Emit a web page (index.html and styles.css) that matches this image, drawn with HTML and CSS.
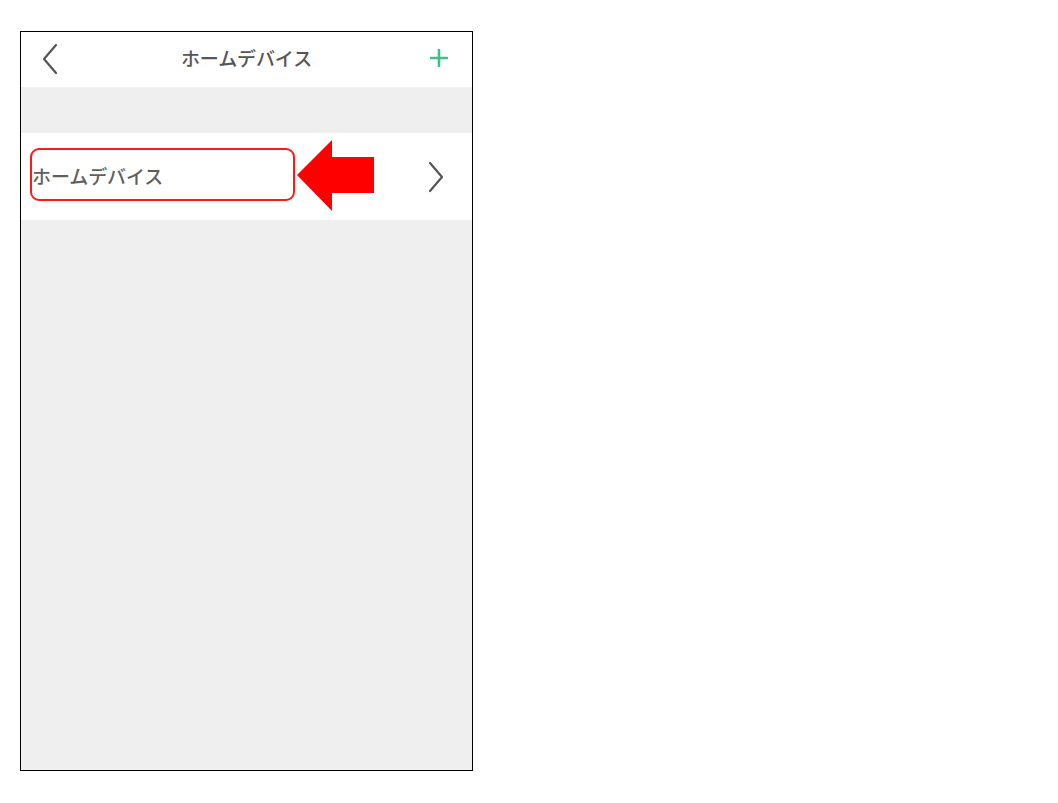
FILE: index.html
```html
<!DOCTYPE html>
<html lang="ja">
<head>
<meta charset="utf-8">
<link rel="stylesheet" href="styles.css">
</head>
<body>
<div class="phone">
  <header class="topbar">
    <span class="back">
      <svg width="16" height="32" viewBox="0 0 16 32"><path d="M14 2 L2 16 L14 30" fill="none" stroke="#555" stroke-width="2.2" stroke-linecap="round" stroke-linejoin="round"/></svg>
    </span>
    <span class="title">ホームデバイス</span>
    <span class="add">
      <svg width="18" height="18" viewBox="0 0 18 18"><path d="M9 1 V17 M1 9 H17" stroke="#3cbf8a" stroke-width="2.6" stroke-linecap="round"/></svg>
    </span>
  </header>
  <div class="spacer"></div>
  <div class="row">
    <div class="highlight"><span class="label">ホームデバイス</span></div>
    <svg class="arrow" width="78" height="72" viewBox="0 0 78 72"><polygon points="0,35 35,0 35,17 77,17 77,53 35,53 35,71" fill="#ff0000"/></svg>
    <span class="chev">
      <svg width="16" height="32" viewBox="0 0 16 32"><path d="M2 2 L14 16 L2 30" fill="none" stroke="#555" stroke-width="2.2" stroke-linecap="round" stroke-linejoin="round"/></svg>
    </span>
  </div>
  <div class="rest"></div>
</div>
</body>
</html>
```

FILE: styles.css
```css
html, body {
  margin: 0;
  padding: 0;
  background: #fff;
}
body {
  font-family: "Noto Sans CJK JP", "Noto Sans", sans-serif;
}
.phone {
  margin: 31px 0 0 20px;
  width: 451px;
  height: 738px;
  border: 1px solid #000;
  background: #efefef;
  display: flex;
  flex-direction: column;
}
.topbar {
  height: 55px;
  background: #fff;
  display: flex;
  align-items: center;
  justify-content: space-between;
  padding: 0 24px 0 21px;
  position: relative;
}
.back, .add, .chev {
  display: flex;
  align-items: center;
}
.back {
  margin-top: -2px;
}
.add {
  margin-top: -3px;
}
.title {
  position: absolute;
  left: 0;
  right: 0;
  margin-top: -4px;
  text-align: center;
  font-size: 19px;
  font-weight: 500;
  color: #555;
  letter-spacing: -0.1px;
  pointer-events: none;
}
.spacer {
  height: 46px;
}
.row {
  height: 87px;
  background: #fff;
  display: flex;
  align-items: center;
  padding: 0 28px 0 9px;
  position: relative;
}
.highlight {
  width: 261px;
  height: 49px;
  border: 2px solid #ff1a1a;
  border-radius: 9px;
  display: flex;
  align-items: center;
  padding-left: 0;
  margin-bottom: 4px;
}
.label {
  font-size: 19px;
  font-weight: 500;
  color: #5f5f5f;
  letter-spacing: -0.1px;
  margin-top: 2px;
}
.arrow {
  position: absolute;
  left: 276px;
  top: 7px;
}
.chev {
  margin-left: auto;
}
.rest {
  flex: 1;
}
```
